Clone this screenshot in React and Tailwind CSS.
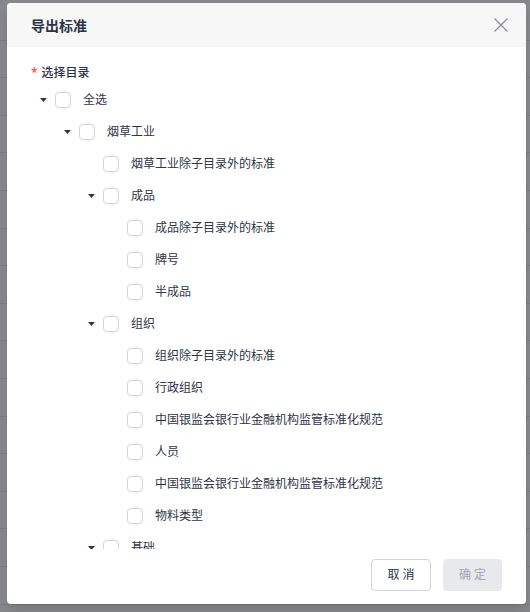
import React from 'react';

const tree = [
  { label: '全选', level: 0, caret: true },
  { label: '烟草工业', level: 1, caret: true },
  { label: '烟草工业除子目录外的标准', level: 2 },
  { label: '成品', level: 2, caret: true },
  { label: '成品除子目录外的标准', level: 3 },
  { label: '牌号', level: 3 },
  { label: '半成品', level: 3 },
  { label: '组织', level: 2, caret: true },
  { label: '组织除子目录外的标准', level: 3 },
  { label: '行政组织', level: 3 },
  { label: '中国银监会银行业金融机构监管标准化规范', level: 3 },
  { label: '人员', level: 3 },
  { label: '中国银监会银行业金融机构监管标准化规范', level: 3 },
  { label: '物料类型', level: 3 },
  { label: '基础', level: 2, caret: true },
];

const indent = ['pl-0', 'pl-6', 'pl-12', 'pl-[72px]'];

const TreeRow = ({ item }) => (
  <div className={`flex h-8 shrink-0 items-center ${indent[item.level]}`}>
    <span className="flex w-6 items-center justify-center">
      {item.caret && (
        <svg width="7" height="4" viewBox="0 0 7 4">
          <path d="M0 0 L7 0 L3.5 4 Z" fill="#2f3545" />
        </svg>
      )}
    </span>
    <span className="h-4 w-4 rounded-[4px] border border-[#d3d5dc] bg-white" />
    <span className={`${item.level === 0 ? 'ml-3' : 'ml-3'} whitespace-nowrap text-[12px] text-[#2f3545]`}>
      {item.label}
    </span>
  </div>
);

export default function App() {
  const bgRows = Array.from({ length: 16 });

  return (
    <div
      className="relative h-[612px] w-[530px] overflow-hidden bg-[#86878a]"
      style={{ fontFamily: '"Noto Sans", "Noto Sans CJK SC", sans-serif' }}
    >
      {/* page under the overlay */}
      <div className="flex flex-col">
        <div className="h-[3px]" />
        {bgRows.map((_, i) => (
          <div key={i} className="h-[37.6px] border-b border-[#7b7c80]" />
        ))}
      </div>

      {/* modal */}
      <div className="absolute left-[7px] top-[3px] flex h-[601px] w-[519px] flex-col overflow-hidden rounded-[4px] bg-white shadow-lg">
        <div className="flex h-[44px] shrink-0 items-center justify-between bg-[#f7f7f8] pl-6 pr-4">
          <h2 className="text-[14px] font-bold text-[#2b3247]">导出标准</h2>
          <svg width="16" height="16" viewBox="0 0 16 16" className="mr-[1px]">
            <path d="M1.5 1.5 L14.5 14.5 M14.5 1.5 L1.5 14.5" stroke="#8b8f98" strokeWidth="1.2" fill="none" />
          </svg>
        </div>

        <div className="flex h-[502px] shrink-0 flex-col overflow-hidden pl-6 pt-4">
          <div className="flex h-5 shrink-0 items-center text-[12px] font-medium text-[#2b3247]">
            <span className="mr-[4px] text-[#f5483b]">*</span>
            选择目录
          </div>
          <div className="mt-px flex flex-col">
            {tree.map((item, i) => (
              <TreeRow key={i} item={item} />
            ))}
          </div>
        </div>

        <div className="flex shrink-0 justify-end gap-3 pr-6 pt-[10px]">
          <button className="h-8 w-[60px] rounded-[4px] border border-[#d3d5dc] bg-white text-[12px] text-[#2b3247]">
            取 消
          </button>
          <button className="h-8 w-[59px] rounded-[4px] bg-[#e8e9ed] text-[12px] text-[#a2a6b0]">
            确 定
          </button>
        </div>
      </div>
    </div>
  );
}
